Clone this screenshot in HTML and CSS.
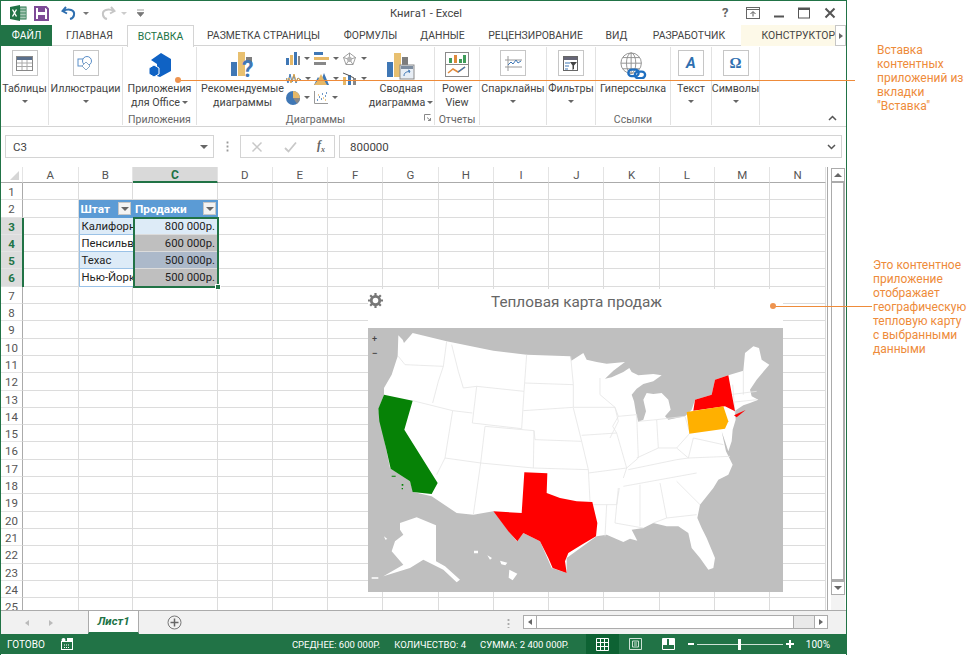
FILE: index.html
```html
<!DOCTYPE html>
<html lang="ru">
<head>
<meta charset="utf-8">
<title>Книга1 - Excel</title>
<link rel="stylesheet" href="styles.css">
</head>
<body>
<div class="page">
  <main class="window">
    <header class="titlebar">
      <div class="qat">
        <svg class="qi" width="18" height="18" viewBox="0 0 18 18"><path d="M1 3l10-2v16L1 15z" fill="#217346"/><rect x="11" y="3" width="6" height="12" fill="#fff" stroke="#217346"/><path d="M13 3v12M15 3v12M11 6h6M11 9h6M11 12h6" stroke="#217346" stroke-width=".8"/><path d="M3.500 5.500l4 7M7.500 5.500l-4 7" stroke="#fff" stroke-width="1.400"/></svg>
        <svg class="qi" width="15" height="15" viewBox="0 0 15 15"><path d="M1 1h11l2 2v11H1z" fill="none" stroke="#7d4a96" stroke-width="2"/><rect x="4" y="1" width="7" height="5" fill="#7d4a96"/><rect x="4" y="9" width="7" height="4" fill="#7d4a96"/></svg>
        <svg class="qi q-undo" width="17" height="14" viewBox="0 0 17 14"><path d="M5 1L1.500 5 6 7.500" fill="none" stroke="#2f6fb0" stroke-width="2"/><path d="M2 5c6-3 12-1 11 4-.3 2-2 3.500-4 4" fill="none" stroke="#2f6fb0" stroke-width="2"/></svg>
        <span class="qcaret"></span>
        <svg class="qi" width="17" height="14" viewBox="0 0 17 14"><path d="M12 1l3.500 4L11 7.500" fill="none" stroke="#c6c6c6" stroke-width="2"/><path d="M15 5C9 2 3 4 4 9c.3 2 2 3.500 4 4" fill="none" stroke="#c6c6c6" stroke-width="2"/></svg>
        <span class="qcaret pale"></span>
        <svg class="qi" width="7" height="8" viewBox="0 0 7 8"><path d="M0 1h7M0 3.500h7L3.500 7.500z" fill="#777" stroke="#777" stroke-width=".7"/></svg>
      </div>
      <div class="doc-title">Книга1 - Excel</div>
      <div class="winctl">
        <span class="help">?</span>
        <svg width="14" height="12" viewBox="0 0 14 12"><rect x=".5" y=".5" width="13" height="11" fill="none" stroke="#666"/><path d="M1 2.500h12" stroke="#666"/><path d="M7 9.500V5M4.500 7L7 4.500 9.500 7" fill="none" stroke="#555"/></svg>
        <svg width="10" height="12" viewBox="0 0 10 12"><path d="M0 9.500h10" stroke="#555" stroke-width="2"/></svg>
        <svg width="12" height="12" viewBox="0 0 12 12"><rect x=".5" y="1" width="11" height="10" fill="none" stroke="#555"/><path d="M0 2h12" stroke="#555" stroke-width="2"/></svg>
        <svg width="12" height="12" viewBox="0 0 12 12"><path d="M1.500 1.500l9 9M10.500 1.500l-9 9" stroke="#555" stroke-width="2"/></svg>
      </div>
    </header>

    <nav class="tabs">
      <div class="tab file">ФАЙЛ</div>
      <div class="tab t-home">ГЛАВНАЯ</div>
      <div class="tab active">ВСТАВКА</div>
      <div class="tab t-page">РАЗМЕТКА СТРАНИЦЫ</div>
      <div class="tab t-form">ФОРМУЛЫ</div>
      <div class="tab t-data">ДАННЫЕ</div>
      <div class="tab t-rev">РЕЦЕНЗИРОВАНИЕ</div>
      <div class="tab t-view">ВИД</div>
      <div class="tab t-dev">РАЗРАБОТЧИК</div>
      <div class="tab design">КОНСТРУКТОР</div>
      <div class="tab-scroll"><span class="tri-right"></span></div>
    </nav>

    <section class="ribbon">
      <div class="group g-tables">
        <div class="btn">
          <div class="icon"><span class="box"><svg width="17" height="15" viewBox="0 0 17 15"><rect x=".5" y=".5" width="16" height="14" fill="#fff" stroke="#888"/><rect x="1" y="1" width="15" height="3" fill="#5a6f8c"/><path d="M1 7h15M1 10.500h15M6 4v10M11 4v10" stroke="#aaa"/></svg></span></div>
          <div class="lbl">Таблицы<span class="caret block"></span></div>
        </div>
      </div>
      <div class="group g-illus">
        <div class="btn">
          <div class="icon"><span class="box"><svg width="17" height="16" viewBox="0 0 17 16"><rect x="1" y="4" width="7" height="7" fill="none" stroke="#5b8fc9"/><circle cx="10" cy="6" r="4.500" fill="#fff" stroke="#5b8fc9"/><path d="M9 7l4 4-4 4-4-4z" fill="#fff" stroke="#8aa8c8"/></svg></span></div>
          <div class="lbl">Иллюстрации<span class="caret block"></span></div>
        </div>
      </div>
      <div class="group g-apps">
        <div class="btn">
          <div class="icon"><svg class="ic-apps" width="24" height="25" viewBox="0 0 24 25"><path d="M3 8l10-7 10 6v12l-11 6-3-1V12z" fill="#0f62c4"/><path d="M6 13l5 3v6l-5 3-5-3v-6z" fill="#0f62c4" stroke="#fff"/></svg></div>
          <div class="lbl">Приложения<br>для Office<span class="caret"></span></div>
        </div>
        <div class="glabel">Приложения</div>
      </div>
      <div class="group g-charts">
        <div class="charts-row">
          <div class="btn b-rec">
            <div class="icon"><svg class="ic-apps" width="24" height="26" viewBox="0 0 24 26"><rect x="0" y="10" width="6" height="14" fill="#3f77b5"/><rect x="7" y="0" width="7" height="24" fill="#e8c070"/><rect x="15" y="5" width="6" height="5" fill="#7d7d7d"/><text x="11" y="25" class="qm">?</text></svg></div>
            <div class="lbl">Рекомендуемые<br>диаграммы</div>
          </div>
          <div class="mini">
            <div class="mi"><svg width="14" height="13" viewBox="0 0 14 13"><rect x="0" y="6" width="3" height="7" fill="#3f77b5"/><rect x="4" y="3" width="3" height="10" fill="#e6b867"/><rect x="8" y="0" width="3" height="13" fill="#3f77b5"/><rect x="12" y="4" width="2" height="9" fill="#888"/></svg><span class="caret"></span></div>
            <div class="mi"><svg width="15" height="13" viewBox="0 0 15 13"><rect x="0" y="0" width="9" height="3" fill="#3f77b5"/><rect x="0" y="5" width="15" height="3" fill="#e6b867"/><rect x="0" y="10" width="12" height="3" fill="#888"/></svg><span class="caret"></span></div>
            <div class="mi"><svg width="15" height="14" viewBox="0 0 15 14"><path d="M7.500 1l6 4.500-2.500 7H4L1.500 5.500zM7.500 1v6.500M13.500 5.500l-6 2M11 12.500l-3.500-5M4 12.500l3.500-5M1.500 5.500l6 2" fill="none" stroke="#888" stroke-width=".8"/><path d="M7.500 4l3 2.500-1.500 3.500H6L4.500 6.500z" fill="#b5b5b5"/></svg><span class="caret"></span></div>
            <div class="mi"><svg width="15" height="13" viewBox="0 0 15 13"><path d="M0 6l2 5 2-9 2 8 2-7 2 8 2-5 3 2" fill="none" stroke="#3f77b5"/><path d="M0 8l3-2 2 5 3-9 2 8 2-4 3 3" fill="none" stroke="#d9a34a"/></svg><span class="caret"></span></div>
            <div class="mi"><svg width="15" height="13" viewBox="0 0 15 13"><path d="M0 13l4-8 3 4 3-8 5 12z" fill="#3f77b5"/><path d="M0 13l4-5 3-6 3 6 3 5z" fill="#e6b867"/></svg><span class="caret"></span></div>
            <div class="mi"><svg width="15" height="14" viewBox="0 0 15 14"><rect x="1" y="6" width="3" height="8" fill="#e6b867"/><rect x="6" y="4" width="3" height="10" fill="#3f77b5"/><rect x="11" y="7" width="3" height="7" fill="#888"/><path d="M1 2l5 2 6 3" fill="none" stroke="#555"/></svg><span class="caret"></span></div>
            <div class="mi"><svg width="14" height="14" viewBox="0 0 14 14"><circle cx="7" cy="7" r="7" fill="#3f77b5"/><path d="M7 7V0a7 7 0 0 1 7 7z" fill="#e6b867"/><path d="M7 7h7a7 7 0 0 1-3 5.700z" fill="#888"/></svg><span class="caret"></span></div>
            <div class="mi"><svg width="14" height="13" viewBox="0 0 14 13"><path d="M.5 0v12.500H14" fill="none" stroke="#999"/><path d="M3 9h1M5 6h1M7 8h1M8 3h1M11 5h1M12 2h1" stroke="#3f77b5" stroke-width="1.500"/><path d="M4 4h1M9 7h1M11 9h1" stroke="#e6b867" stroke-width="1.500"/></svg><span class="caret"></span></div>
          </div>
          <div class="btn b-piv">
            <div class="icon"><svg class="ic-apps" width="28" height="28" viewBox="0 0 28 28"><rect x="0" y="10" width="6" height="15" fill="#3f77b5"/><rect x="7" y="1" width="7" height="24" fill="#e8c070"/><rect x="15" y="5" width="6" height="14" fill="#7d7d7d"/><rect x="13" y="13" width="14" height="14" fill="#e8eef5" stroke="#8a8a8a"/><rect x="14" y="14" width="12" height="3" fill="#7d8da0"/><path d="M17 24c0-4 3-4 6-5M21 18l2 1-1 2" fill="none" stroke="#3f77b5"/></svg></div>
            <div class="lbl">Сводная<br>диаграмма<span class="caret"></span></div>
          </div>
        </div>
        <div class="glabel">Диаграммы</div>
        <svg class="launcher" width="7" height="7" viewBox="0 0 7 7"><path d="M.5 6.500V.5h6M3 3.500l3.500 3M4 6.500h2.500V4" fill="none" stroke="#888"/></svg>
      </div>
      <div class="group g-rep">
        <div class="btn">
          <div class="icon"><svg class="ic-apps" width="24" height="25" viewBox="0 0 24 25"><rect x=".5" y=".5" width="23" height="24" fill="#fff" stroke="#8a8a8a"/><path d="M1 12.500h22" stroke="#8a8a8a"/><rect x="4" y="6" width="3" height="5" fill="#3f9c5a"/><rect x="9" y="3" width="3" height="8" fill="#e08a3c"/><rect x="14" y="7" width="3" height="4" fill="#3f9c5a"/><rect x="18" y="3" width="3" height="8" fill="#3f9c5a"/><path d="M3 21l5-4 5 3 7-5" fill="none" stroke="#e08a3c" stroke-width="1.500"/><path d="M13 20l7-5" stroke="#3f77b5" stroke-width="1.500"/></svg></div>
          <div class="lbl">Power<br>View</div>
        </div>
        <div class="glabel">Отчеты</div>
      </div>
      <div class="group g-spark">
        <div class="btn">
          <div class="icon"><span class="box"><svg width="17" height="15" viewBox="0 0 17 15"><path d="M3 0v15M0 4h17M0 11h17" stroke="#999"/><path d="M3 9l3-3 2 2 3-4 2 3 3-2" fill="none" stroke="#3f77b5"/></svg></span></div>
          <div class="lbl">Спарклайны<span class="caret block"></span></div>
        </div>
      </div>
      <div class="group g-filter">
        <div class="btn">
          <div class="icon"><span class="box"><svg width="15" height="15" viewBox="0 0 15 15"><rect x=".5" y=".5" width="14" height="14" fill="#fff" stroke="#666"/><rect x="1" y="1" width="13" height="3" fill="#667"/><path d="M2 7h5M2 10h4M2 13h3" stroke="#3f77b5"/><path d="M7 6h7l-3 3.500V13l-1.500 1V9.500z" fill="#444"/></svg></span></div>
          <div class="lbl">Фильтры<span class="caret block"></span></div>
        </div>
      </div>
      <div class="group g-links">
        <div class="btn">
          <div class="icon"><svg class="ic-apps" width="28" height="27" viewBox="0 0 30 29"><circle cx="13" cy="12" r="11" fill="#fff" stroke="#8f8f8f"/><ellipse cx="13" cy="12" rx="5" ry="11" fill="none" stroke="#8f8f8f"/><path d="M13 1v22M2 12h22M4 6h18M4 18h18" stroke="#8f8f8f"/><rect x="10" y="19" width="11" height="7" rx="3.500" fill="none" stroke="#1f6fc0" stroke-width="2.500"/><rect x="17" y="21" width="11" height="7" rx="3.500" fill="none" stroke="#1f6fc0" stroke-width="2.500"/></svg></div>
          <div class="lbl">Гиперссылка</div>
        </div>
        <div class="glabel">Ссылки</div>
      </div>
      <div class="group g-text">
        <div class="btn">
          <div class="icon"><span class="box"><span class="glyph-a">A</span></span></div>
          <div class="lbl">Текст<span class="caret block"></span></div>
        </div>
      </div>
      <div class="group g-sym">
        <div class="btn">
          <div class="icon"><span class="box"><span class="glyph-o">Ω</span></span></div>
          <div class="lbl">Символы<span class="caret block"></span></div>
        </div>
      </div>
      <svg class="collapse" width="9" height="6" viewBox="0 0 9 6"><path d="M1 5l3.500-3.500L8 5" fill="none" stroke="#555" stroke-width="1.500"/></svg>
    </section>

    <section class="formula">
      <div class="namebox"><span>C3</span><span class="tri-down"></span></div>
      <div class="fdots"></div>
      <div class="fbtns">
        <svg width="12" height="12" viewBox="0 0 12 12"><path d="M1.500 1.500l9 9M10.500 1.500l-9 9" stroke="#c8c8c8" stroke-width="1.500"/></svg>
        <svg width="13" height="12" viewBox="0 0 13 12"><path d="M1 7l3.500 3.500L12 1.500" fill="none" stroke="#c8c8c8" stroke-width="1.800"/></svg>
        <span class="fx">f<sub>x</sub></span>
      </div>
      <div class="fvalue"><span>800000</span><svg width="9" height="6" viewBox="0 0 9 6"><path d="M1 1l3.500 3.500L8 1" fill="none" stroke="#555" stroke-width="1.500"/></svg></div>
    </section>

    <section class="workarea">
      <div class="sheet">
        <div class="ch corner"><span class="corner-tri"></span></div><div class="ch">A</div><div class="ch">B</div><div class="ch sel">C</div><div class="ch">D</div><div class="ch">E</div><div class="ch">F</div><div class="ch">G</div><div class="ch">H</div><div class="ch">I</div><div class="ch">J</div><div class="ch">K</div><div class="ch">L</div><div class="ch">M</div><div class="ch">N</div>
        <div class="rh">1</div><div></div><div></div><div></div><div></div><div></div><div></div><div></div><div></div><div></div><div></div><div></div><div></div><div></div><div></div>
        <div class="rh">2</div><div></div><div class="th">Штат<span class="fbtn"><span class="tri-down"></span></span></div><div class="th">Продажи<span class="fbtn"><span class="tri-down"></span></span></div><div></div><div></div><div></div><div></div><div></div><div></div><div></div><div></div><div></div><div></div><div></div>
        <div class="rh sel">3</div><div></div><div class="td band">Калифорния</div><div class="td num band">800 000р.</div><div></div><div></div><div></div><div></div><div></div><div></div><div></div><div></div><div></div><div></div><div></div>
        <div class="rh sel">4</div><div></div><div class="td">Пенсильвания</div><div class="td num heat1">600 000р.</div><div></div><div></div><div></div><div></div><div></div><div></div><div></div><div></div><div></div><div></div><div></div>
        <div class="rh sel">5</div><div></div><div class="td band">Техас</div><div class="td num heat2">500 000р.</div><div></div><div></div><div></div><div></div><div></div><div></div><div></div><div></div><div></div><div></div><div></div>
        <div class="rh sel">6</div><div></div><div class="td">Нью-Йорк</div><div class="td num heat1">500 000р.</div><div></div><div></div><div></div><div></div><div></div><div></div><div></div><div></div><div></div><div></div><div></div>
        <div class="rh">7</div><div></div><div></div><div></div><div></div><div></div><div></div><div></div><div></div><div></div><div></div><div></div><div></div><div></div><div></div>
        <div class="rh">8</div><div></div><div></div><div></div><div></div><div></div><div></div><div></div><div></div><div></div><div></div><div></div><div></div><div></div><div></div>
        <div class="rh">9</div><div></div><div></div><div></div><div></div><div></div><div></div><div></div><div></div><div></div><div></div><div></div><div></div><div></div><div></div>
        <div class="rh">10</div><div></div><div></div><div></div><div></div><div></div><div></div><div></div><div></div><div></div><div></div><div></div><div></div><div></div><div></div>
        <div class="rh">11</div><div></div><div></div><div></div><div></div><div></div><div></div><div></div><div></div><div></div><div></div><div></div><div></div><div></div><div></div>
        <div class="rh">12</div><div></div><div></div><div></div><div></div><div></div><div></div><div></div><div></div><div></div><div></div><div></div><div></div><div></div><div></div>
        <div class="rh">13</div><div></div><div></div><div></div><div></div><div></div><div></div><div></div><div></div><div></div><div></div><div></div><div></div><div></div><div></div>
        <div class="rh">14</div><div></div><div></div><div></div><div></div><div></div><div></div><div></div><div></div><div></div><div></div><div></div><div></div><div></div><div></div>
        <div class="rh">15</div><div></div><div></div><div></div><div></div><div></div><div></div><div></div><div></div><div></div><div></div><div></div><div></div><div></div><div></div>
        <div class="rh">16</div><div></div><div></div><div></div><div></div><div></div><div></div><div></div><div></div><div></div><div></div><div></div><div></div><div></div><div></div>
        <div class="rh">17</div><div></div><div></div><div></div><div></div><div></div><div></div><div></div><div></div><div></div><div></div><div></div><div></div><div></div><div></div>
        <div class="rh">18</div><div></div><div></div><div></div><div></div><div></div><div></div><div></div><div></div><div></div><div></div><div></div><div></div><div></div><div></div>
        <div class="rh">19</div><div></div><div></div><div></div><div></div><div></div><div></div><div></div><div></div><div></div><div></div><div></div><div></div><div></div><div></div>
        <div class="rh">20</div><div></div><div></div><div></div><div></div><div></div><div></div><div></div><div></div><div></div><div></div><div></div><div></div><div></div><div></div>
        <div class="rh">21</div><div></div><div></div><div></div><div></div><div></div><div></div><div></div><div></div><div></div><div></div><div></div><div></div><div></div><div></div>
        <div class="rh">22</div><div></div><div></div><div></div><div></div><div></div><div></div><div></div><div></div><div></div><div></div><div></div><div></div><div></div><div></div>
        <div class="rh">23</div><div></div><div></div><div></div><div></div><div></div><div></div><div></div><div></div><div></div><div></div><div></div><div></div><div></div><div></div>
        <div class="rh">24</div><div></div><div></div><div></div><div></div><div></div><div></div><div></div><div></div><div></div><div></div><div></div><div></div><div></div><div></div>
        <div class="rh">25</div><div></div><div></div><div></div><div></div><div></div><div></div><div></div><div></div><div></div><div></div><div></div><div></div><div></div><div></div>
        <div class="selection"><span class="handle"></span></div>
        <div class="rowmark"></div>
        <aside class="heatmap">
          <div class="hm-head">
            <svg class="gear" width="15" height="15" viewBox="0 0 15 15"><circle cx="7.500" cy="7.500" r="4.200" fill="none" stroke="#777" stroke-width="2.800"/><path d="M7.500 0v3M7.500 12v3M0 7.500h3M12 7.500h3M2.200 2.200l2 2M10.800 10.800l2 2M12.800 2.200l-2 2M4.200 10.800l-2 2" stroke="#777" stroke-width="2.200"/></svg>
            <span>Тепловая карта продаж</span>
          </div>
          <svg class="map" viewBox="24 130 1245 792" width="415" height="264">
            <rect x="24" y="130" width="1245" height="792" fill="#bfbfbf"/>
            <path class="land" d="M115 152L128 165 132 175 158 145 260 170 400 198 500 210 630 215 634 228 670 205 680 225 710 232 740 237 795 232 760 258 735 282 755 278 790 262 808 250 815 262 835 272 880 268 905 272 880 290 850 298 830 312 815 330 822 350 828 385 835 412 850 405 858 380 850 345 860 325 880 328 905 325 925 345 932 375 915 395 925 405 975 395 995 375 1005 345 1055 330 1065 285 1105 272 1150 258 1155 205 1180 185 1197 190 1205 225 1228 240 1190 285 1170 315 1175 335 1195 345 1170 355 1150 362 1125 378 1127 405 1118 435 1115 470 1105 500 1095 470 1085 440 1098 500 1118 540 1105 570 1075 585 1060 610 1020 660 1012 700 1025 730 1040 760 1065 820 1060 850 1045 855 1020 820 995 790 985 745 955 725 920 725 880 715 850 730 815 735 832 768 810 762 790 772 740 750 710 755 620 820 620 865 575 850 540 770 490 745 470 770 400 680 340 690 290 685 215 635 160 622 150 590 90 550 78 490 55 375 72 330 72 310 95 270 113 215z"/>
            <path class="line" d="M115 215L135 240 250 245M260 170L250 245 235 290 218 355M158 348L278 378 337 385M275 180L295 260 310 310 350 305 492 320M500 210L492 320 485 432M350 305L337 415 485 432M495 295L640 300M490 378L640 368M632 215L640 300 640 368M278 378L255 520 362 535 375 425M255 520L230 570M362 535L340 690M375 425L522 438 520 550 362 535M522 438L525 465 665 470 640 370M665 470L685 555 520 550M685 555L690 650M665 452L770 445 758 425 775 395M770 445L800 550 685 565M640 368L765 368 775 410 750 460M720 280L720 330 765 368 775 395 830 390 835 520 800 550 790 580M835 410L890 405 895 490 830 520M890 405L975 395 990 445 950 490 895 490M805 555L950 525 985 520 1110 515M790 605L1010 565M690 660L770 660 778 610M740 660L735 755M775 610L765 715 850 730M840 600L840 725M900 595L920 700 880 715M950 590L1020 660M920 700L1010 690M950 490L985 520 1000 460 1090 480M1125 385L1118 300M1150 258L1150 330M1110 330L1190 320M1125 352L1190 345"/>
            <path class="ca" d="M72 330L158 348 133 435 233 595 215 628 158 622 150 590 92 552 78 490 58 410 55 372z"/>
            <path class="ca" d="M95 573h12v3H95zM125 598h5v5h-5zM125 610h4v4h-4z"/>
            <path class="tx" d="M493 563L562 566 560 625 600 640 650 650 697 652 712 715 708 755 665 780 625 805 615 830 620 865 578 850 565 820 540 770 490 745 472 770 445 740 400 680 485 685z"/>
            <path class="tx" d="M1105 272L1125 380 1095 365 1000 378 1005 345 1055 330 1065 285zM1122 392L1157 376 1130 398z"/>
            <path class="pa" d="M980 382L1090 365 1105 410 1095 432 988 447z"/>
            <path class="land" d="M120 715L170 698 228 722 228 830 255 845 300 885 290 893 250 855 190 825 150 850 70 875 130 840 95 800 105 770 130 750 120 735zM35 878h20v4H35zM72 755l10 8-6 2zM342 798h12v8h-12zM382 812l14 8-6 5zM420 828l22 6-6 8-12-3zM448 855l24 12-14 20-12-8z"/>
            <text x="36" y="173" class="zoomsign">+</text>
            <text x="36" y="213" class="zoomsign">−</text>
          </svg>
        </aside>
      </div>
      <div class="vscroll">
        <div class="sb-btn"><span class="tri-up"></span></div>
        <div class="sb-thumb"></div>
        <div class="sb-btn"><span class="tri-down"></span></div>
      </div>
    </section>

    <section class="sheetbar">
      <div class="sheetnav"><span class="tri-left pale"></span><span class="tri-right pale"></span></div>
      <div class="sheettab">Лист1</div>
      <svg class="addsheet" width="15" height="15" viewBox="0 0 15 15"><circle cx="7.500" cy="7.500" r="6.500" fill="none" stroke="#777"/><path d="M7.500 3.500v8M3.500 7.500h8" stroke="#666" stroke-width="1.500"/></svg>
      <div class="hdots"></div>
      <div class="hscroll">
        <div class="hbtn"><span class="tri-left"></span></div>
        <div class="hthumb"></div>
        <div class="htrack"></div>
        <div class="hbtn"><span class="tri-right"></span></div>
      </div>
    </section>

    <footer class="status">
      <span class="st-ready">ГОТОВО</span>
      <svg class="st-macro" width="12" height="12" viewBox="0 0 12 12"><rect x=".5" y="3.500" width="11" height="8" fill="none" stroke="#fff"/><circle cx="2.500" cy="2" r="2" fill="#fff"/><rect x="6" y="0" width="6" height="3" fill="#fff"/><path d="M3 9.500h6M3 7h6" stroke="#fff" stroke-dasharray="1 1"/></svg>
      <span class="st-stats first">СРЕДНЕЕ: 600 000Р.</span>
      <span class="st-stats">КОЛИЧЕСТВО: 4</span>
      <span class="st-stats">СУММА: 2 400 000Р.</span>
      <div class="viewbtn on"><svg width="13" height="13" viewBox="0 0 13 13"><path d="M.5.500h12v12H.5zM4.500.500v12M8.500.500v12M.5 4.500h12M.5 8.500h12" fill="none" stroke="#fff"/></svg></div>
      <div class="viewbtn"><svg width="13" height="12" viewBox="0 0 13 12"><path d="M.5.500h12v11H.5zM3.500 3h6v6h-6zM5 5h3M5 7h3" fill="none" stroke="#cfe2d6"/></svg></div>
      <div class="viewbtn"><svg width="13" height="12" viewBox="0 0 13 12"><path d="M.5.500h12v11H.5z" fill="none" stroke="#fff"/><path d="M1 0h4v7H1zM7 0h5v7H7z" fill="#fff"/></svg></div>
      <div class="zoomer">
        <span class="zm"></span>
        <div class="slider"><span class="thumb"></span></div>
        <span class="zp"></span>
      </div>
      <span class="st-pct">100%</span>
    </footer>
  </main>

  <div class="callout c1"><span class="dot"></span></div>
  <p class="note n1">Вставка<br>контентных<br>приложений из<br>вкладки<br>"Вставка"</p>
  <div class="callout c2"><span class="dot"></span></div>
  <p class="note n2">Это контентное<br>приложение<br>отображает<br>географическую<br>тепловую карту<br>с выбранными<br>данными</p>
</div>
</body>
</html>
```

FILE: styles.css
```css
* { box-sizing: border-box; }
html, body { margin: 0; padding: 0; background: #fff; }
body { font-family: Roboto, "Open Sans", sans-serif; color: #444; font-size: 11px; }
.page { position: relative; width: 973px; height: 655px; overflow: hidden; }
.window { width: 847px; height: 655px; display: flex; flex-direction: column; border: 1px solid #217346; border-bottom: 0; background: #fff; }

/* title bar */
.titlebar { height: 24px; flex: none; display: flex; align-items: center; position: relative; }
.qat { display: flex; align-items: center; padding-left: 8px; }
.qi { display: block; margin-right: 7px; flex: none; }
.q-undo { margin-left: 5px; }
.qcaret { width: 0; height: 0; border: 3px solid transparent; border-top-color: #777; border-bottom: 0; margin: 1px 10px 0 -2px; }
.qcaret.pale { border-top-color: #ccc; }
.doc-title { position: absolute; left: 389px; top: 5px; font-size: 11.200px; line-height: 15px; color: #444; }
.winctl { margin-left: auto; display: flex; align-items: center; gap: 14px; padding-right: 10px; }
.winctl svg { display: block; }
.help { font-size: 13px; font-weight: 700; color: #666; line-height: 14px; width: 10px; }

/* tabs */
.tabs { height: 21px; flex: none; display: flex; color: #444; border-bottom: 1px solid #d4d4d4; }
.tab { flex: none; text-align: center; line-height: 22px; height: 21px; white-space: nowrap; font-size: 10.400px; }
.tab.file { width: 51px; background: #217346; color: #fff; }
.t-home { width: 75px; }
.tab.active { width: 67px; color: #217346; border: 1px solid #d4d4d4; border-bottom: 0; background: #fff; height: 22px; position: relative; line-height: 21px; }
.t-page { width: 139px; }
.t-form { width: 75px; }
.t-data { width: 69px; }
.t-rev { width: 117px; }
.t-view { width: 45px; }
.t-dev { width: 100px; }
.tab.design { margin-left: 2px; width: 94px; text-align: right; background: #fdf9e8; }
.tab-scroll { width: 11px; height: 21px; border: 1px solid #c6c6c6; display: flex; align-items: center; justify-content: center; flex: none; }
.tri-right { width: 0; height: 0; border: 3px solid transparent; border-left: 4px solid #666; border-right: 0; display: block; }
.tri-left { width: 0; height: 0; border: 3px solid transparent; border-right: 4px solid #666; border-left: 0; display: block; }
.tri-down { width: 0; height: 0; border: 4px solid transparent; border-top: 4px solid #666; border-bottom: 0; display: block; }
.tri-up { width: 0; height: 0; border: 4px solid transparent; border-bottom: 4px solid #666; border-top: 0; display: block; }
.pale.tri-left { border-right-color: #bbb; }
.pale.tri-right { border-left-color: #bbb; }

/* ribbon */
.ribbon { height: 81px; flex: none; display: flex; position: relative; border-bottom: 1px solid #d4d4d4; font-size: 10.700px; color: #444; }
.group { position: relative; display: flex; flex-direction: column; align-items: center; height: 78px; margin-top: 1px; border-right: 1px solid #e2e2e2; flex: none; }
.g-tables { width: 48px; }
.g-illus { width: 74px; }
.g-apps { width: 74px; }
.g-charts { width: 238px; }
.g-rep { width: 45px; }
.g-spark { width: 67px; }
.g-filter { width: 49px; }
.g-links { width: 75px; }
.g-text { width: 41px; }
.g-sym { width: 48px; }
.btn { display: flex; flex-direction: column; align-items: center; }
.icon { height: 35px; display: flex; align-items: flex-start; justify-content: center; padding-top: 3px; }
.ic-apps { margin-top: 2px; }
.box { width: 26px; height: 26px; border: 1px solid #c6c6c6; display: flex; align-items: center; justify-content: center; background: #fff; }
.lbl { line-height: 14px; text-align: center; white-space: nowrap; }
.caret { display: inline-block; width: 0; height: 0; border: 3px solid transparent; border-top-color: #666; border-bottom: 0; margin-left: 2px; vertical-align: 2px; }
.caret.block { display: block; margin: 4px auto 0; }
.glabel { position: absolute; left: 0; right: 0; bottom: -2px; text-align: center; font-size: 10.500px; line-height: 14px; color: #666; }
.charts-row { display: flex; width: 100%; }
.b-rec { width: 89px; padding-left: 2px; }
.qm { font: 700 23px Roboto, sans-serif; fill: #3f77b5; text-anchor: start; }
.mini { width: 82px; display: grid; grid-template-columns: 28px 28px 26px; grid-auto-rows: 19.500px; padding-top: 2px; }
.mi { display: flex; align-items: center; }
.mi .caret { margin-left: 4px; vertical-align: 0; }
.b-piv { flex: 1; }
.launcher { position: absolute; right: 3px; bottom: 4px; }
.glyph-a { font: italic 700 15px Roboto, sans-serif; color: #2f6fb0; }
.glyph-o { font: 700 15px "Liberation Serif", serif; color: #2f6fb0; }
.collapse { position: absolute; right: 9px; bottom: 5px; }

/* formula bar */
.formula { height: 23px; flex: none; margin-top: 8px; display: flex; align-items: stretch; padding-left: 4px; }
.namebox { width: 209px; border: 1px solid #d4d4d4; display: flex; align-items: center; justify-content: space-between; padding: 0 5px 0 7px; font-size: 11.500px; }
.fdots { width: 26px; background: radial-gradient(circle, #999 1px, transparent 1.200px) center/3px 4px repeat-y; margin: 6px 0; }
.fbtns { width: 95px; border: 1px solid #d4d4d4; display: flex; align-items: center; justify-content: space-between; padding: 0 9px 0 10px; }
.fx { font: italic 700 12px "Liberation Serif", serif; color: #666; }
.fx sub { font-size: 8px; }
.fvalue { width: 503px; margin-left: 4px; border: 1px solid #d4d4d4; display: flex; align-items: center; justify-content: space-between; padding: 0 5px 0 10px; font-size: 11.500px; }

/* work area */
.workarea { flex: 1; min-height: 0; margin-top: 9px; display: flex; position: relative; }
.sheet { position: relative; flex: none; width: 827px; height: 443px; overflow: hidden; display: grid; grid-template-columns: 22px 55.500px 54.500px 85px 54.500px 55.500px 55.300px 55.300px 55.300px 55.300px 55.300px 55.300px 55.300px 55.300px 55.300px; grid-template-rows: 16px repeat(25, 17.300px); border-right: 1px solid #aaa; font-size: 11.300px; }
.sheet > div { border-right: 1px solid #dcdcdc; border-bottom: 1px solid #dcdcdc; min-width: 0; }
.sheet > .ch { background: #fff; text-align: center; line-height: 17px; font-size: 11.500px; color: #555; border-bottom-color: #ababab; border-right-color: #e4e4e4; }
.sheet > .ch.sel { background: #d9d9d9; color: #217346; font-weight: 700; border-bottom: 2px solid #217346; font-size: 12px; }
.corner { position: relative; }
.corner-tri { position: absolute; right: 3px; bottom: 2px; width: 0; height: 0; border-left: 9px solid transparent; border-bottom: 9px solid #d6d6d6; }
.sheet > .rh { text-align: center; line-height: 19px; font-size: 11.500px; color: #555; background: #fff; border-right-color: #ababab; border-bottom-color: #e4e4e4; }
.sheet > .rh.sel { background: #dcdcdc; color: #217346; font-weight: 700; }
.sheet > .th { background: #5b9bd5; color: #fff; font-weight: 700; font-size: 11.800px; padding-left: 2px; line-height: 19px; position: relative; border-color: #5b9bd5; white-space: nowrap; }
.fbtn { position: absolute; right: 1px; top: 2px; width: 13px; height: 13px; background: #f3f3f3; border: 1px solid #c6c6c6; display: flex; align-items: center; justify-content: center; }
.sheet > .td { padding: 0 2px; line-height: 18px; white-space: nowrap; overflow: hidden; color: #222; border-color: #9bc2e6; border-right: 0; border-left: 1px solid #9bc2e6; }
.sheet > .td.num { text-align: right; border-left: 0; padding-right: 3px; border-color: #dcdcdc; }
.band { background: #ddebf7; }
.heat1 { background: #bfbfbf; }
.heat2 { background: #acb9ca; }
.sheet > .selection { position: absolute; left: 132px; top: 50px; width: 86px; height: 71px; border: 2px solid #217346; }
.handle { position: absolute; right: -4px; bottom: -4px; width: 6px; height: 6px; background: #217346; border: 1px solid #fff; }
.sheet > .rowmark { position: absolute; left: 21px; top: 51px; width: 2px; height: 69px; background: #217346; border: 0; }
.sheet > .heatmap { position: absolute; left: 367px; top: 122px; width: 415px; height: 303px; background: #fff; border: 0; overflow: hidden; }
.hm-head { height: 39px; display: flex; align-items: center; justify-content: center; position: relative; font-size: 15.300px; color: #666; padding-bottom: 14px; padding-left: 2px; }
.gear { position: absolute; left: 0; top: 4px; }
.map { display: block; }
.land { fill: #fff; }
.line { fill: none; stroke: #e6e6e6; stroke-width: 2.500; }
.ca { fill: #068206; }
.tx { fill: #f00; }
.pa { fill: #ffb000; }
.zoomsign { font: 700 26px "Liberation Sans", sans-serif; fill: #444; text-anchor: start; }

/* scrollbars */
.vscroll { flex: none; width: 14px; margin: 1px 0 0 3px; height: 442px; display: flex; flex-direction: column; background: #f3f3f3; }
.sb-btn { height: 14px; flex: none; border: 1px solid #ababab; background: #fff; display: flex; align-items: center; justify-content: center; }
.sb-thumb { height: 399px; flex: none; border: 1px solid #ababab; background: #fff; border-bottom-width: 2px; border-right-width: 2px; }

/* sheet tabs bar */
.sheetbar { height: 24px; flex: none; background: #f1f1f1; display: flex; align-items: center; position: relative; border-top: 1px solid #ababab; }
.sheetnav { width: 87px; display: flex; gap: 20px; padding-left: 24px; }
.sheettab { width: 51px; height: 23px; margin-top: -1px; background: #fff; border: 1px solid #ababab; border-top: 0; border-bottom: 2px solid #217346; text-align: center; line-height: 21px; font-weight: 700; font-style: italic; color: #217346; font-size: 11.500px; position: relative; }
.addsheet { margin-left: 28px; display: block; }
.hdots { position: absolute; left: 506px; top: 7px; width: 3px; height: 10px; background: radial-gradient(circle, #aaa 1px, transparent 1.200px) 0 0/3px 4px repeat-y; }
.hscroll { position: absolute; left: 522px; top: 4px; width: 305px; height: 14px; display: flex; border: 1px solid #ababab; background: #e9e9e9; }
.hbtn { width: 12px; background: #fff; display: flex; align-items: center; justify-content: center; }
.hthumb { width: 258px; background: #fff; border-left: 1px solid #ababab; border-right: 1px solid #ababab; }
.htrack { flex: 1; border-right: 1px solid #ababab; }

/* status bar */
.status { height: 20px; flex: none; background: #217346; color: #fff; display: flex; align-items: center; font-size: 9.500px; margin-bottom: 1px; position: relative; }
.st-ready { margin-left: 6px; font-size: 10px; }
.st-macro { margin-left: 16px; }
.st-stats { margin-right: 14px; white-space: nowrap; }
.st-stats.first { margin-left: auto; }
.viewbtn { height: 20px; width: 33px; display: flex; align-items: center; justify-content: center; flex: none; }
.viewbtn.on { background: #0d6233; margin-left: 3px; }
.zoomer { display: flex; align-items: center; margin-left: 3px; flex: none; }
.zm { width: 6px; height: 2px; background: #fff; }
.slider { width: 86px; height: 1px; background: #cfe2d6; margin: 0 3px; position: relative; }
.thumb { position: absolute; left: 41px; top: -5px; width: 3px; height: 11px; background: #fff; }
.zp { width: 8px; height: 8px; background: linear-gradient(#fff, #fff) center/8px 2px no-repeat, linear-gradient(#fff, #fff) center/2px 8px no-repeat; }
.st-pct { margin-left: 12px; margin-right: 16px; flex: none; font-size: 10px; }

/* callouts */
.callout { position: absolute; height: 1px; background: #ee8b3a; }
.c1 { left: 177px; top: 80px; width: 678px; }
.c2 { left: 772px; top: 306px; width: 100px; }
.dot { position: absolute; left: -2px; top: -3px; width: 6px; height: 6px; border-radius: 50%; background: #ee9450; }
.note { position: absolute; margin: 0; color: #ee8b3a; font-size: 12px; line-height: 14px; white-space: nowrap; }
.n1 { left: 877px; top: 43px; }
.n2 { left: 873px; top: 258px; }
```
